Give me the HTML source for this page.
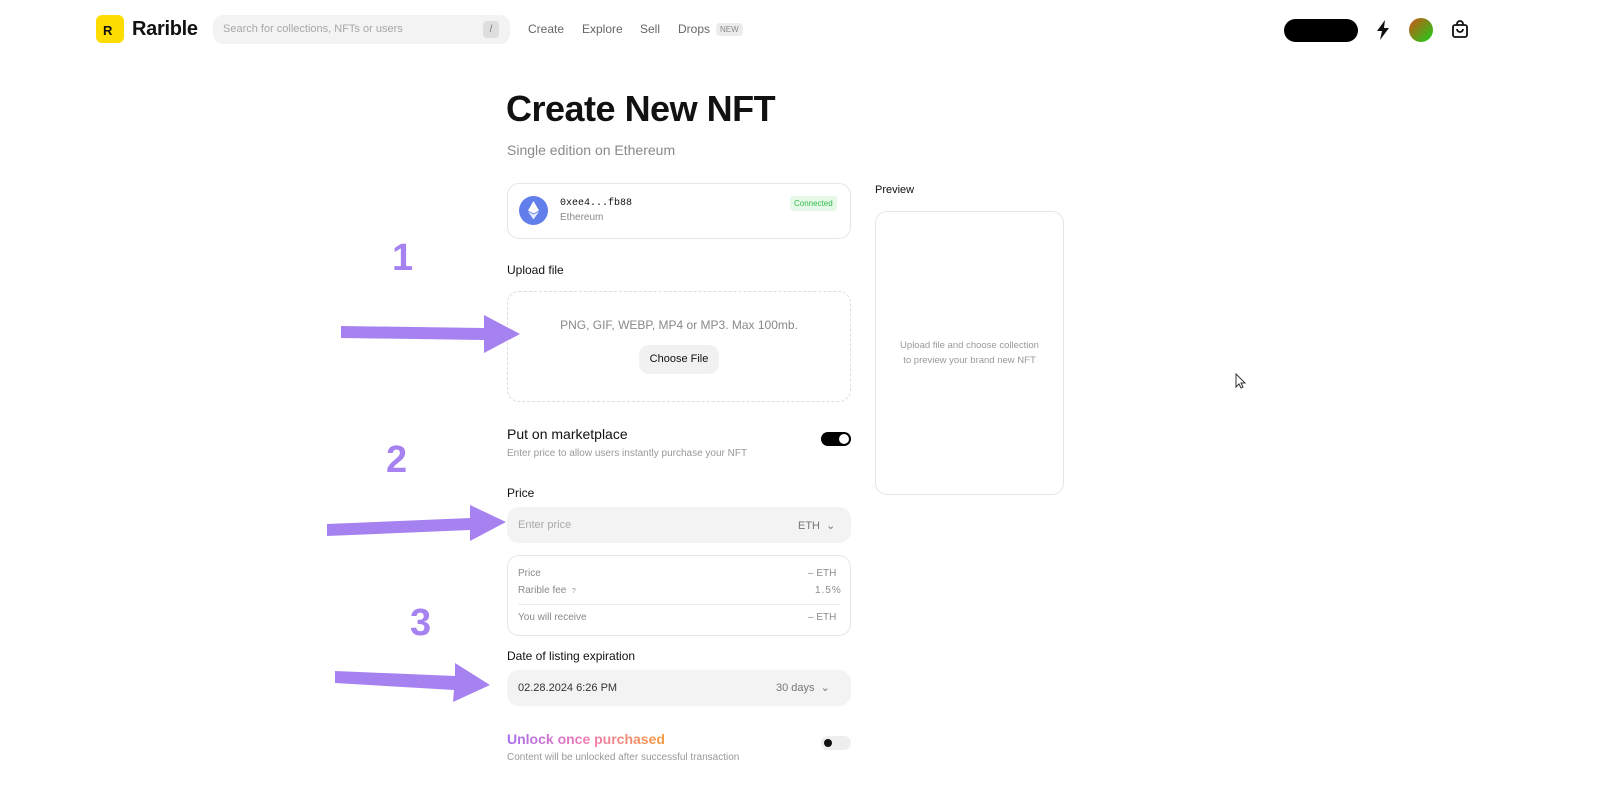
<!DOCTYPE html>
<html><head><style>
*{box-sizing:border-box;margin:0;padding:0}
body{width:1600px;height:801px;background:#fff;font-family:"Liberation Sans",sans-serif;color:#111;position:relative;overflow:hidden}
.a{position:absolute}
.g{color:#8a8a8a}
.card{border:1px solid #e6e6e6;border-radius:12px}
.inp{background:#f3f3f3;border-radius:12px}
</style></head><body>
<div class="a" style="left:96px;top:15px;width:28px;height:28px;background:#fedc00;border-radius:6px"></div>
<div class="a" style="left:103px;top:23px;font-weight:bold;font-size:13px">R</div>
<div class="a" style="left:132px;top:18px;font-size:20px;font-weight:bold;letter-spacing:-0.3px">Rarible</div>
<div class="a inp" style="left:213px;top:15px;width:297px;height:29px;border-radius:10px"></div>
<div class="a g" style="left:223px;top:23px;font-size:11px;color:#a8a8a8">Search for collections, NFTs or users</div>
<div class="a" style="left:483px;top:21px;width:16px;height:17px;background:#dedede;border-radius:4px;font-size:10px;color:#777;text-align:center;line-height:17px">/</div>
<div class="a" style="left:528px;top:22px;font-size:12px;color:#666">Create</div>
<div class="a" style="left:582px;top:22px;font-size:12px;color:#666">Explore</div>
<div class="a" style="left:640px;top:22px;font-size:12px;color:#666">Sell</div>
<div class="a" style="left:678px;top:22px;font-size:12px;color:#666">Drops</div>
<div class="a" style="left:716px;top:23px;font-size:8px;color:#888;background:#ececec;border-radius:4px;padding:2px 4px">NEW</div>
<div class="a" style="left:1284px;top:19px;width:74px;height:23px;background:#000;border-radius:12px"></div>
<svg class="a" style="left:1374px;top:19px" width="18" height="22" viewBox="0 0 18 22"><path d="M11 1L3 12h5l-2 9 9-12h-5z" fill="#111"/></svg>
<div class="a" style="left:1409px;top:18px;width:24px;height:24px;border-radius:50%;background:linear-gradient(135deg,#d0541a,#16d016)"></div>
<svg class="a" style="left:1450px;top:19px" width="20" height="20" viewBox="0 0 20 20" fill="none" stroke="#111" stroke-width="1.8"><rect x="3" y="6" width="14" height="12" rx="2"/><path d="M7 6V5a3 3 0 016 0v1M7 10a3 3 0 006 0"/></svg>

<div class="a" style="left:506px;top:88px;font-size:36px;font-weight:bold;letter-spacing:-0.5px">Create New NFT</div>
<div class="a g" style="left:507px;top:142px;font-size:14px">Single edition on Ethereum</div>

<div class="a card" style="left:507px;top:183px;width:344px;height:56px"></div>
<div class="a" style="left:519px;top:196px;width:29px;height:29px;border-radius:50%;background:#627eea"></div>
<svg class="a" style="left:526px;top:200px" width="15" height="21" viewBox="0 0 15 21"><path d="M7.5 1L2 10.5l5.5 3 5.5-3z" fill="#fff"/><path d="M7.5 14.5L2 11.5l5.5 8 5.5-8z" fill="#fff" opacity=".85"/></svg>
<div class="a" style="left:560px;top:198px;font-family:'Liberation Mono',monospace;font-size:10px">0xee4...fb88</div>
<div class="a g" style="left:560px;top:212px;font-size:10px">Ethereum</div>
<div class="a" style="left:790px;top:196px;background:#e6f8e8;color:#2ebd4a;font-size:8px;padding:3px 4px;border-radius:3px">Connected</div>

<div class="a" style="left:507px;top:263px;font-size:12px">Upload file</div>
<div class="a" style="left:507px;top:291px;width:344px;height:111px;border:1px dashed #ddd;border-radius:12px"></div>
<div class="a g" style="left:507px;top:318px;width:344px;text-align:center;font-size:12px;color:#888">PNG, GIF, WEBP, MP4 or MP3. Max 100mb.</div>
<div class="a" style="left:639px;top:345px;width:80px;height:29px;background:#f1f1f1;border-radius:10px;font-size:11px;text-align:center;line-height:29px">Choose File</div>

<div class="a" style="left:507px;top:426px;font-size:14px;font-weight:500">Put on marketplace</div>
<div class="a g" style="left:507px;top:448px;font-size:10px;color:#999">Enter price to allow users instantly purchase your NFT</div>
<div class="a" style="left:821px;top:432px;width:30px;height:14px;background:#000;border-radius:7px"></div>
<div class="a" style="left:839px;top:434px;width:10px;height:10px;background:#fff;border-radius:50%"></div>

<div class="a" style="left:507px;top:486px;font-size:12px">Price</div>
<div class="a inp" style="left:507px;top:507px;width:344px;height:36px"></div>
<div class="a" style="left:518px;top:519px;font-size:11px;color:#aaa">Enter price</div>
<div class="a" style="left:798px;top:519px;font-size:11px;color:#777">ETH &nbsp;⌄</div>

<div class="a card" style="left:507px;top:555px;width:344px;height:81px"></div>
<div class="a g" style="left:518px;top:568px;font-size:10px">Price</div>
<div class="a g" style="left:808px;top:568px;font-size:10px">– ETH</div>
<div class="a g" style="left:518px;top:585px;font-size:10px">Rarible fee &nbsp;<span style="font-size:7px">?</span></div>
<div class="a g" style="left:815px;top:585px;font-size:10px;letter-spacing:1px">1.5%</div>
<div class="a" style="left:518px;top:604px;width:322px;height:1px;background:#ececec"></div>
<div class="a g" style="left:518px;top:612px;font-size:10px">You will receive</div>
<div class="a g" style="left:808px;top:612px;font-size:10px">– ETH</div>

<div class="a" style="left:507px;top:649px;font-size:12px">Date of listing expiration</div>
<div class="a inp" style="left:507px;top:670px;width:344px;height:36px"></div>
<div class="a" style="left:518px;top:682px;font-size:11px;color:#333">02.28.2024 6:26 PM</div>
<div class="a" style="left:776px;top:681px;font-size:11px;color:#777">30 days &nbsp;⌄</div>

<div class="a" style="left:507px;top:731px;font-size:14px;font-weight:bold;background:linear-gradient(90deg,#a66cf0,#f07ab4 50%,#f59a3a);-webkit-background-clip:text;color:transparent">Unlock once purchased</div>
<div class="a g" style="left:507px;top:752px;font-size:10px;color:#999">Content will be unlocked after successful transaction</div>
<div class="a" style="left:821px;top:736px;width:30px;height:14px;background:#eee;border-radius:7px"></div>
<div class="a" style="left:824px;top:739px;width:8px;height:8px;background:#111;border-radius:50%"></div>

<div class="a" style="left:875px;top:184px;font-size:11px">Preview</div>
<div class="a card" style="left:875px;top:211px;width:189px;height:284px"></div>
<div class="a g" style="left:895px;top:338px;width:149px;text-align:center;font-size:9.5px;line-height:15px;color:#999">Upload file and choose collection to preview your brand new NFT</div>

<svg class="a" style="left:0;top:0" width="1600" height="801">
<g fill="#a682f0">
<polygon points="341,326 484,328 484,315 520,334 484,353 484,340 341,338"/>
<polygon points="327,524 470,518 470,505 506,522 470,541 470,530 327,536"/>
<polygon points="335,671 455,676 455,663 490,685 453,702 454,690 335,683"/>
</g>
<g fill="#a682f0" font-family="Liberation Sans" font-weight="bold" font-size="38">
<text x="392" y="270">1</text>
<text x="386" y="472">2</text>
<text x="410" y="635">3</text>
</g>
<path d="M1236 374v13l3-3 2 4 2-1-2-4h4z" fill="#fff" stroke="#333" stroke-width="1"/>
</svg>
</body></html>
